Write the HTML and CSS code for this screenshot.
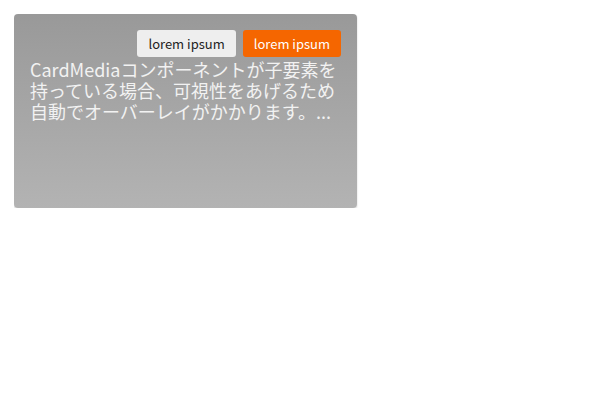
FILE: index.html
```html
<!DOCTYPE html>
<html>
<head>
<meta charset="utf-8">
<link rel="stylesheet" href="styles.css">
</head>
<body>
<div class="card">
  <div class="actions">
    <button class="btn btn-light">lorem ipsum</button>
    <button class="btn btn-primary">lorem ipsum</button>
  </div>
  <p class="text">CardMediaコンポーネントが子要素を持っている場合、可視性をあげるため自動でオーバーレイがかかります。...</p>
</div>
</body>
</html>
```
FILE: styles.css
```css
body {
  margin: 14px;
  font-family: "Noto Sans CJK JP", "Noto Sans", sans-serif;
}
.card {
  width: 343px;
  height: 194px;
  box-sizing: border-box;
  border-radius: 4px;
  background: linear-gradient(#999999, #b3b3b3);
  box-shadow: 0 1px 2px rgba(0,0,0,0.2);
  padding: 16px 16px;
}
.actions {
  display: flex;
  justify-content: flex-end;
  gap: 7px;
}
.btn {
  height: 27px;
  padding: 0 11px;
  border: none;
  border-radius: 3px;
  font-family: "Noto Sans CJK JP", "Noto Sans", sans-serif;
  font-size: 13px;
  cursor: pointer;
}
.btn-light {
  background: #eeeeee;
  color: #222222;
}
.btn-primary {
  background: #f56600;
  color: #ffffff;
}
.text {
  margin: 2px 0 0;
  color: #f2f2f2;
  font-size: 18px;
  line-height: 21px;
}
```
